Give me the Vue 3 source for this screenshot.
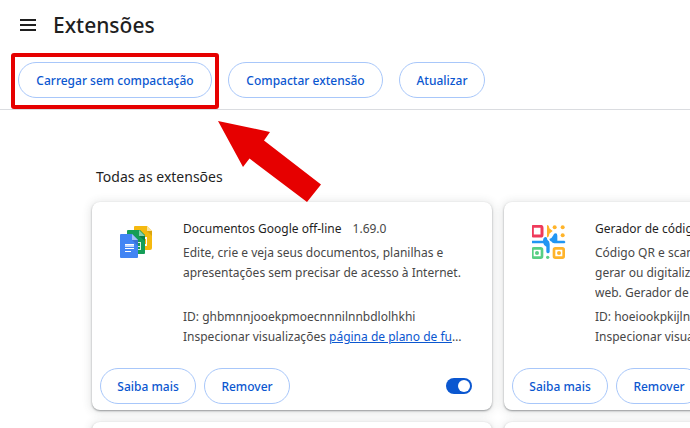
<script setup>
import { reactive } from 'vue'

const extensions = reactive([
  {
    key: 'docs',
    name: 'Documentos Google off-line',
    version: '1.69.0',
    description: 'Edite, crie e veja seus documentos, planilhas e apresentações sem precisar de acesso à Internet.',
    id: 'ghbmnnjooekpmoecnnnilnnbdlolhkhi',
    view: 'página de plano de fundo',
    enabled: true,
  },
  {
    key: 'qr',
    name: 'Gerador de código QR',
    version: '',
    description: 'Código QR e scanner para\ngerar ou digitalizar na\nweb. Gerador de códigos.',
    id: 'hoeiookpkijln',
    view: 'service worker',
    enabled: true,
  },
])
</script>

<template>
  <div class="page">
    <header class="header">
      <button class="menu" type="button" aria-label="Menu principal">
        <svg width="16" height="12" viewBox="0 0 16 12" aria-hidden="true">
          <path d="M0 0h16v2H0zM0 5h16v2H0zM0 10h16v2H0z" fill="#1f1f1f" />
        </svg>
      </button>
      <h1>Extensões</h1>
    </header>

    <nav class="toolbar">
      <div class="highlight">
        <button class="pill load" type="button">Carregar sem compactação</button>
        <svg class="arrow" width="104" height="84" viewBox="0 0 104 84" aria-hidden="true">
          <path d="M0 1 52 12 46 20.500 103 64.500 89 82 31.500 38.500 25 47z" fill="#e60000" />
        </svg>
      </div>
      <button class="pill pack" type="button">Compactar extensão</button>
      <button class="pill short" type="button">Atualizar</button>
    </nav>

    <main class="content">
      <h2>Todas as extensões</h2>
      <div class="grid">
        <article v-for="ext in extensions" :key="ext.key" class="card">
          <div class="body">
            <svg v-if="ext.key === 'docs'" class="icon" width="34" height="34" viewBox="0 0 34 34" aria-hidden="true">
              <path d="M15 1h12l5 5v17a2 2 0 0 1-2 2H15a1 1 0 0 1-1-1V2a1 1 0 0 1 1-1z" fill="#f5b90f" />
              <path d="M27 1l5 5h-5z" fill="#fbe29a" />
              <path d="M27 6h5v5z" fill="#dba50d" />
              <path d="M25 12h2v9h-2v-2h1v-5h-1z" fill="#fff" />
              <path d="M8 5h12l5 5v18a1 1 0 0 1-1 1H8a1 1 0 0 1-1-1V6a1 1 0 0 1 1-1z" fill="#159d58" />
              <path d="M19 5l6 6h-6z" fill="#87ceac" />
              <path d="M19 11h6v5z" fill="#0c7d47" />
              <path d="M17 17h4v8h-4v-1h3v-2h-3v-1h3v-3h-3z" fill="#d9f0e4" />
              <path d="M1 9h11l6 6v17a1 1 0 0 1-1 1H1a1 1 0 0 1-1-1V10a1 1 0 0 1 1-1z" fill="#4285f4" />
              <path d="M12 9l6 6h-6z" fill="#a1c2fa" />
              <path d="M12 15h6v6z" fill="#3a72d4" />
              <path d="M5 19h9v3H5z" fill="#c6dafc" />
              <path d="M5 19h9v1H5zM5 23h9v1H5zM5 26h6v1H5z" fill="#fff" />
            </svg>
            <svg v-else class="icon" width="36" height="34" viewBox="3 0 108 102" aria-hidden="true">
              <rect x="4" y="4" width="29" height="29" rx="4" fill="none" stroke="#ef3b5b" stroke-width="9" />
              <path d="M48 0q6 0 7 10l10 8-10 8q-1 11-7 11z" fill="#ffb42a" />
              <g fill="#ffb42a">
                <circle cx="71" cy="7" r="6" />
                <circle cx="95" cy="7" r="6" />
                <circle cx="95" cy="31" r="6" />
              </g>
              <path d="M3 47h33q1-11 8-11 5 0 5 8 7 4 7 13v23q-1 5-5 5t-5-5V65q-8-2-9-10H3q-6-4 0-8z" fill="#2196f3" />
              <path d="M55 42q8-2 12-11 1-6 7-6 5 0 5 7v15h21q6 4 0 8H70q-7-1-8-5-6-2-7-8z" fill="#2196f3" />
              <rect x="4" y="70" width="29" height="28" rx="4" fill="none" stroke="#57cf83" stroke-width="8" />
              <circle cx="18" cy="84" r="6" fill="#57cf83" />
              <circle cx="50" cy="97" r="5" fill="#57cf83" />
              <rect x="69" y="70" width="29" height="28" rx="4" fill="none" stroke="#ffb42a" stroke-width="8" />
              <circle cx="84" cy="84" r="6" fill="#ffb42a" />
            </svg>
            <div class="info">
              <h3>{{ ext.name }} <span class="version">{{ ext.version }}</span></h3>
              <p class="description">{{ ext.description }}</p>
              <p class="line">ID: {{ ext.id }}</p>
              <p class="line">Inspecionar visualizações <a href="#">{{ ext.view }}</a></p>
            </div>
          </div>
          <div class="actions">
            <button class="pill details" type="button">Saiba mais</button>
            <button class="pill short" type="button">Remover</button>
            <input v-model="ext.enabled" class="toggle" type="checkbox" role="switch" :aria-label="ext.name" />
          </div>
        </article>
        <article class="card"></article>
        <article class="card"></article>
      </div>
    </main>
  </div>
</template>

<style>
body {
  background: #fff;
}
</style>

<style scoped>
.page {
  height: 100vh;
  overflow: hidden;
  color: #1f1f1f;
  font-family: "Noto Sans", "Open Sans", sans-serif;
  font-size: 12px;
  line-height: 20px;
}
h1, h2, h3, p {
  margin: 0;
  font-weight: 400;
}
.header {
  display: flex;
  align-items: center;
  gap: 17px;
  height: 50px;
  padding-left: 20px;
}
.menu {
  display: flex;
  padding: 0;
  border: 0;
  background: none;
}
h1 {
  font-size: 21px;
  font-weight: 500;
  line-height: 28px;
}
.toolbar {
  display: flex;
  gap: 16px;
  padding: 12px 18px 11px;
  border-bottom: 1px solid #dadce0;
}
.highlight {
  position: relative;
}
.highlight::after {
  content: "";
  position: absolute;
  inset: -9px -7px -11px;
  border: 4px solid #e60000;
  border-radius: 3px;
  pointer-events: none;
}
.arrow {
  position: absolute;
  top: 58px;
  left: 200px;
  pointer-events: none;
}
.pill {
  height: 36px;
  box-sizing: border-box;
  padding: 1px 0 0;
  border: 1px solid #a8c7fa;
  border-radius: 18px;
  background: #fff;
  color: #0b57d0;
  font: 500 12px/20px "Noto Sans", "Open Sans", sans-serif;
  white-space: nowrap;
}
.load {
  width: 194px;
}
.pack {
  width: 155px;
}
.details {
  width: 96px;
}
.short {
  width: 86px;
}
.content {
  padding: 57px 92px 0;
}
h2 {
  padding-left: 4px;
  font-size: 14px;
  line-height: 20px;
}
.grid {
  display: grid;
  grid-template-columns: repeat(2, 400px);
  grid-auto-rows: 208px;
  gap: 12px;
  margin-top: 15px;
}
.card {
  display: flex;
  flex-direction: column;
  justify-content: space-between;
  border-radius: 8px;
  background: #fff;
  box-shadow: 0 1px 2px rgba(60, 64, 67, 0.5), 0 1px 8px 2px rgba(60, 64, 67, 0.12);
}
.body {
  display: flex;
  justify-content: space-between;
  padding: 17px 24px 0 28px;
}
.icon {
  flex: none;
  margin-top: 6px;
}
.info {
  min-width: 0;
  flex: 0 0 285px;
  color: #474747;
}
h3 {
  color: #1f1f1f;
  font-size: 12px;
  white-space: nowrap;
}
.version {
  margin-left: 8px;
  color: #474747;
}
.description {
  height: 60px;
  margin: 4px 0;
  overflow: hidden;
  white-space: pre-line;
}
.line {
  overflow: hidden;
  text-overflow: ellipsis;
  white-space: nowrap;
}
a {
  color: #0b57d0;
}
.actions {
  display: flex;
  align-items: center;
  gap: 8px;
  padding: 0 20px 6px 8px;
}
.toggle {
  appearance: none;
  display: flex;
  align-items: center;
  box-sizing: border-box;
  width: 26px;
  height: 16px;
  margin: 0 0 0 auto;
  padding: 2px;
  border-radius: 8px;
  background: #0b57d0;
}
.toggle:not(:checked) {
  background: #747775;
}
.toggle::before {
  content: "";
  width: 12px;
  height: 12px;
  border-radius: 50%;
  background: #fff;
}
.toggle:checked {
  justify-content: flex-end;
}
</style>
